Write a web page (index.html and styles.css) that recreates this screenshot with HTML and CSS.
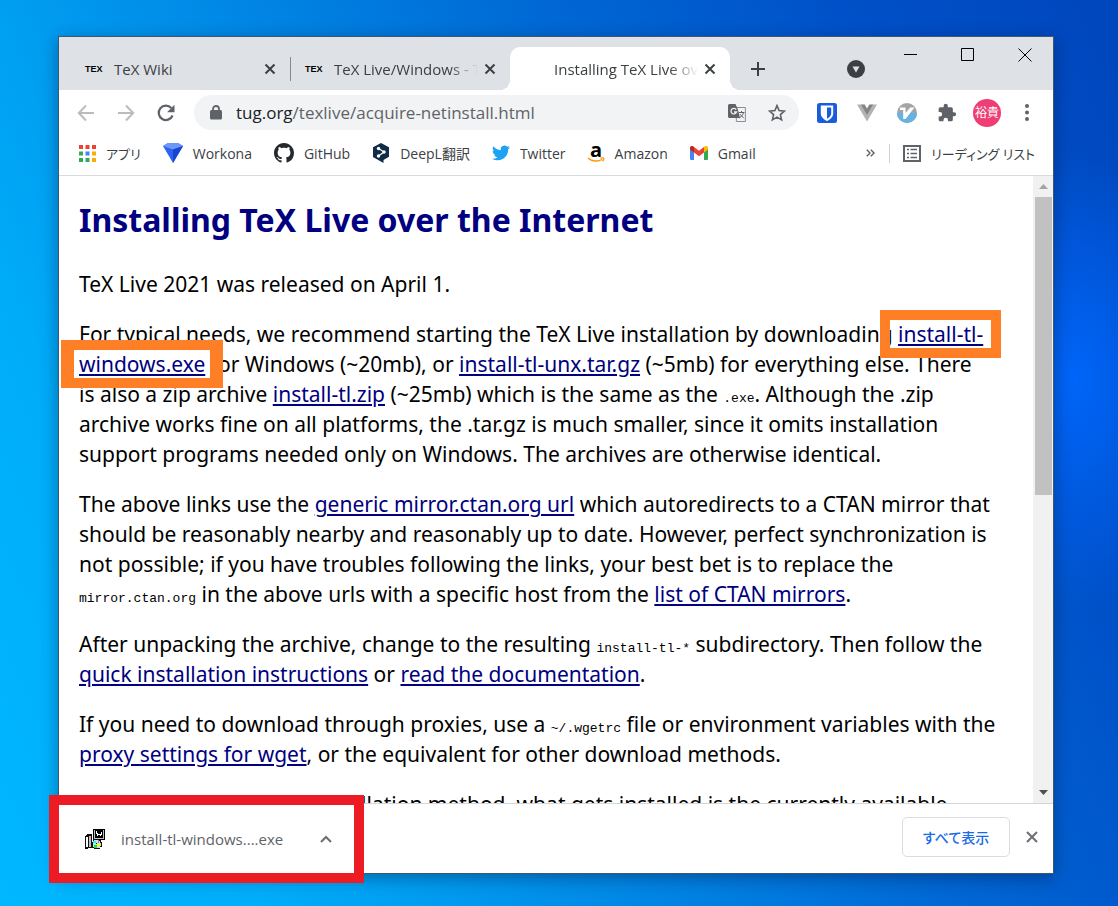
FILE: index.html
```html
<!DOCTYPE html>
<html lang="ja">
<head>
<meta charset="utf-8">
<title>Installing TeX Live over the Internet</title>
<link rel="stylesheet" href="styles.css">
</head>
<body>
<main class="window">
  <header class="tabstrip">
    <div class="tab">
      <span class="favicon">TEX</span><span class="tab-title">TeX Wiki</span>
      <button class="icon-btn" aria-label="Close tab"><svg width="12" height="12" viewBox="0 0 12 12"><path d="M1.500 1.500l9 9M10.500 1.500l-9 9" stroke="#3c4043" stroke-width="2"/></svg></button>
    </div>
    <div class="tab tab-second">
      <span class="favicon">TEX</span><span class="tab-title fade">TeX Live/Windows - T</span>
      <button class="icon-btn" aria-label="Close tab"><svg width="12" height="12" viewBox="0 0 12 12"><path d="M1.500 1.500l9 9M10.500 1.500l-9 9" stroke="#3c4043" stroke-width="2"/></svg></button>
    </div>
    <div class="tab tab-active">
      <span class="favicon"></span><span class="tab-title fade">Installing TeX Live ove</span>
      <button class="icon-btn" aria-label="Close tab"><svg width="12" height="12" viewBox="0 0 12 12"><path d="M1.500 1.500l9 9M10.500 1.500l-9 9" stroke="#3c4043" stroke-width="2"/></svg></button>
    </div>
    <button class="icon-btn new-tab" aria-label="New tab"><svg width="16" height="16" viewBox="0 0 16 16"><path d="M8 1v14M1 8h14" stroke="#3c4043" stroke-width="2"/></svg></button>
    <div class="strip-end">
      <button class="icon-btn tab-search" aria-label="Search tabs"><svg width="18" height="18" viewBox="0 0 18 18"><circle cx="9" cy="9" r="9" fill="#3c4043"/><path d="M5.500 6.500h7L9 12.500z" fill="#dee1e6"/></svg></button>
      <div class="win-controls">
        <button class="icon-btn" aria-label="Minimize"><svg width="14" height="14" viewBox="0 0 14 14"><path d="M0 6.500h13" stroke="#000"/></svg></button>
        <button class="icon-btn" aria-label="Maximize"><svg width="14" height="14" viewBox="0 0 14 14"><path d="M.5.5h12v12H.5z" fill="none" stroke="#000"/></svg></button>
        <button class="icon-btn" aria-label="Close"><svg width="14" height="14" viewBox="0 0 14 14"><path d="M.5.5l13 13M13.500.5l-13 13" stroke="#000"/></svg></button>
      </div>
    </div>
  </header>

  <nav class="toolbar">
    <button class="icon-btn nav-btn" aria-label="Back"><svg width="18" height="18" viewBox="0 0 18 18"><path d="M17 9H2M9 1.500L1.800 9l7.200 7.500" fill="none" stroke="#babcbe" stroke-width="2"/></svg></button>
    <button class="icon-btn nav-btn" aria-label="Forward"><svg width="18" height="18" viewBox="0 0 18 18"><path d="M1 9h15M9 1.500L16.200 9 9 16.500" fill="none" stroke="#babcbe" stroke-width="2"/></svg></button>
    <button class="icon-btn nav-btn" aria-label="Reload"><svg width="18" height="18" viewBox="0 0 18 18"><path d="M15.600 11.500A7.200 7.200 0 1 1 14.300 4" fill="none" stroke="#5f6368" stroke-width="2.200"/><path d="M17.500.8v7.400h-7.400z" fill="#5f6368"/></svg></button>
    <div class="omnibox">
      <svg class="lock" width="12" height="15" viewBox="0 0 12 15"><rect x="0" y="5" width="12" height="9.500" rx="1.500" fill="#5f6368"/><path d="M3 6V4a3 3 0 0 1 6 0v2" fill="none" stroke="#5f6368" stroke-width="1.800"/></svg>
      <span class="url"><b>tug.org</b>/texlive/acquire-netinstall.html</span>
      <button class="icon-btn" aria-label="Translate"><svg width="18" height="18" viewBox="0 0 18 18"><path d="M8 3.500h9.400v14h-9z" fill="#f1f3f4" stroke="#8a8d91"/><path d="M1.500 0h6l2.300 5.300L12 14H1.500A1.500 1.500 0 0 1 0 12.500v-11A1.500 1.500 0 0 1 1.500 0z" fill="#5f6368"/><path d="M8.200 5.600A2.800 2.800 0 1 0 8.500 8H6" fill="none" stroke="#f1f3f4" stroke-width="1.300"/><path d="M10.500 8.500h6M13.500 7v1.500M15.500 8.500c-.5 2.500-2 4-4 5.500M11.800 10l4 4.200" fill="none" stroke="#5f6368"/></svg></button>
      <button class="icon-btn" aria-label="Bookmark"><svg width="18" height="18" viewBox="0 0 18 18"><path d="M9 1.600l2.100 5 5.300.5-4 3.500 1.200 5.300L9 13.100l-4.600 2.800 1.200-5.300-4-3.500 5.300-.5z" fill="none" stroke="#5f6368" stroke-width="1.600"/></svg></button>
    </div>
    <div class="extensions">
      <button class="icon-btn" aria-label="Bitwarden"><svg width="20" height="20" viewBox="0 0 20 20"><rect width="20" height="20" rx="2.500" fill="#175ddc"/><path d="M3.800 2.500h12.400v7.700c0 4-3.200 6.400-6.200 7.800-3-1.400-6.200-3.800-6.200-7.800z" fill="#fff"/><path d="M10 4.500h4.200v5.700c0 2.600-1.900 4.200-4.200 5.500z" fill="#175ddc"/></svg></button>
      <button class="icon-btn" aria-label="Vue"><svg width="20" height="20" viewBox="0 0 20 20"><path d="M0 1.500h5.500L10 9.500l4.500-8H20L10 18.500z" fill="#b3b3b3"/><path d="M4 1.500h3.700L10 5.500l2.300-4H16L10 12z" fill="#858585"/></svg></button>
      <button class="icon-btn" aria-label="Vimium"><svg width="20" height="20" viewBox="0 0 20 20"><circle cx="10" cy="10" r="10" fill="#a5a5a5"/><path d="M0 10h20a10 10 0 0 1-20 0z" fill="#66b2e4"/><path d="M3 4.500h5.500v5.500l4.700-5.500h4.300L8.500 16H6.200V7H3z" fill="#fff"/></svg></button>
      <button class="icon-btn" aria-label="Extensions"><svg width="20" height="20" viewBox="0 0 24 24"><path d="M20.500 11H19V7a2 2 0 0 0-2-2h-4V3.500a2.500 2.500 0 0 0-5 0V5H4a2 2 0 0 0-2 2v3.800h1.500a2.700 2.700 0 0 1 0 5.400H2V20a2 2 0 0 0 2 2h3.800v-1.500a2.700 2.700 0 0 1 5.400 0V22H17a2 2 0 0 0 2-2v-4h1.500a2.500 2.500 0 0 0 0-5z" fill="#5f6368"/></svg></button>
      <button class="avatar">裕貴</button>
      <button class="icon-btn menu" aria-label="Menu"><svg width="4" height="17" viewBox="0 0 4 17" fill="#5f6368"><circle cx="2" cy="2" r="2"/><circle cx="2" cy="8.500" r="2"/><circle cx="2" cy="15" r="2"/></svg></button>
    </div>
  </nav>

  <nav class="bookmarks">
    <a class="bm kana" href="#"><svg width="17" height="17" viewBox="0 0 17 17"><path d="M0 0h4v4H0zM6.500 0h4v4h-4zM13 0h4v4h-4z" fill="#ea4335"/><path d="M0 6.500h4v4H0zM0 13h4v4H0zM6.500 13h4v4h-4z" fill="#34a853"/><path d="M6.500 6.500h4v4h-4z" fill="#4285f4"/><path d="M13 6.500h4v4h-4zM13 13h4v4h-4z" fill="#fbac05"/></svg>アプリ</a>
    <a class="bm" href="#"><svg width="20" height="20" viewBox="0 0 20 20"><path d="M0 3l5-3h10l5 3-10 17z" fill="#2d62f0"/><path d="M0 3l5-3h10l5 3-10 3.500z" fill="#6c97fc"/><path d="M10 6.500L20 3 10 20z" fill="#1745cf"/></svg>Workona</a>
    <a class="bm" href="#"><svg width="20" height="20" viewBox="0 0 16 16"><path fill="#24292e" d="M8 0C3.580 0 0 3.580 0 8c0 3.540 2.290 6.530 5.470 7.590.4.070.55-.17.55-.38 0-.19-.01-.82-.01-1.490-2.010.37-2.530-.49-2.690-.94-.09-.23-.48-.94-.82-1.130-.28-.15-.68-.52-.01-.53.63-.01 1.080.58 1.230.82.72 1.210 1.870.87 2.330.66.070-.52.28-.87.51-1.070-1.780-.2-3.640-.89-3.640-3.950 0-.87.31-1.590.82-2.150-.08-.2-.36-1.020.08-2.120 0 0 .67-.21 2.200.82.640-.18 1.320-.27 2-.27s1.360.09 2 .27c1.530-1.040 2.200-.82 2.200-.82.44 1.100.16 1.920.08 2.120.51.56.82 1.270.82 2.150 0 3.070-1.870 3.750-3.650 3.950.29.25.54.73.54 1.480 0 1.070-.01 1.930-.01 2.200 0 .21.15.46.55.38A8.010 8.010 0 0 0 16 8c0-4.420-3.580-8-8-8z"/></svg>GitHub</a>
    <a class="bm" href="#"><svg width="18" height="20" viewBox="0 0 18 20"><path d="M9 0l8 4.300v9.400L11.500 17v3L1 14V4.300z" fill="#0f2b46"/><path d="M6.500 5.500L12 9l-5.500 4" fill="none" stroke="#fff" stroke-width="1.200"/><g fill="#fff"><circle cx="6.500" cy="5.500" r="1.700"/><circle cx="12" cy="9" r="1.700"/><circle cx="6.500" cy="13" r="1.700"/></g></svg>DeepL翻訳</a>
    <a class="bm" href="#"><svg width="18" height="18" viewBox="0 0 24 24"><path fill="#1da1f2" d="M23.953 4.570a10 10 0 0 1-2.825.775 4.958 4.958 0 0 0 2.163-2.723c-.951.555-2.005.959-3.127 1.184a4.920 4.920 0 0 0-8.384 4.482C7.690 8.095 4.067 6.130 1.640 3.162a4.822 4.822 0 0 0-.666 2.475c0 1.710.87 3.213 2.188 4.096a4.904 4.904 0 0 1-2.228-.616v.06a4.923 4.923 0 0 0 3.946 4.827 4.996 4.996 0 0 1-2.212.085 4.936 4.936 0 0 0 4.604 3.417 9.867 9.867 0 0 1-6.102 2.105c-.39 0-.779-.023-1.170-.067a13.995 13.995 0 0 0 7.557 2.209c9.053 0 13.998-7.496 13.998-13.985 0-.21 0-.42-.015-.63A9.935 9.935 0 0 0 24 4.590z"/></svg>Twitter</a>
    <a class="bm" href="#"><span class="amazon">a<svg width="17" height="6" viewBox="0 0 17 6"><path d="M0 1c4 3.500 10 4 14 1.500M12.500 1.200c2-.5 3-.3 3.200 0 .3.600-.2 2-1.200 3" fill="none" stroke="#f90" stroke-width="1.400"/></svg></span>Amazon</a>
    <a class="bm" href="#"><svg width="18" height="14" viewBox="0 0 18 14"><path d="M0 2v10.700C0 13.400.6 14 1.300 14H4V5.500z" fill="#4285f4"/><path d="M18 2v10.700c0 .7-.6 1.300-1.300 1.300H14V5.500z" fill="#34a853"/><path d="M14 1v5.500l4-3V2c0-2-2-2.500-3-1.700z" fill="#fbbc04"/><path d="M4 1v5.500l-4-3V2C0 0 2-.5 3 .3z" fill="#c5221f"/><path d="M4 1l5 3.800L14 1v5.500l-5 3.800-5-3.800z" fill="#ea4335"/></svg>Gmail</a>
    <div class="bm-end">
      <button class="more" aria-label="More bookmarks"><svg width="9" height="8" viewBox="0 0 9 8"><path d="M.8.8L4 4 .8 7.200M4.800.8L8 4 4.800 7.200" fill="none" stroke="#5f6368" stroke-width="1.400"/></svg></button>
      <a class="bm kana reading" href="#"><svg width="18" height="17" viewBox="0 0 18 17"><path d="M1 1h16v15H1z" fill="none" stroke="#5f6368" stroke-width="2"/><path d="M4 4.500h2M7.500 4.500H14M4 8.500h2M7.500 8.500H14M4 12.500h2M7.500 12.500H14" stroke="#5f6368" stroke-width="1.600"/></svg>リーディング リスト</a>
    </div>
  </nav>

  <section class="viewport">
    <article class="page">
      <h1>Installing TeX Live over the Internet</h1>
      <p>TeX Live 2021 was released on April 1.</p>
      <p>For typical needs, we recommend starting the TeX Live installation by downloading <a href="#"><span class="mark">install-tl-</span><br><span class="mark mark-wide">windows.exe</span></a> for Windows (~20mb), or <a href="#">install-tl-unx.tar.gz</a> (~5mb) for everything else. There<br>is also a zip archive <a href="#">install-tl.zip</a> (~25mb) which is the same as the <code>.exe</code>. Although the .zip<br>archive works fine on all platforms, the .tar.gz is much smaller, since it omits installation<br>support programs needed only on Windows. The archives are otherwise identical.</p>
      <p>The above links use the <a href="#">generic mirror.ctan.org url</a> which autoredirects to a CTAN mirror that<br>should be reasonably nearby and reasonably up to date. However, perfect synchronization is<br>not possible; if you have troubles following the links, your best bet is to replace the<br><code>mirror.ctan.org</code> in the above urls with a specific host from the <a href="#">list of CTAN mirrors</a>.</p>
      <p>After unpacking the archive, change to the resulting <code>install-tl-*</code> subdirectory. Then follow the<br><a href="#">quick installation instructions</a> or <a href="#">read the documentation</a>.</p>
      <p>If you need to download through proxies, use a <code>~/.wgetrc</code> file or environment variables with the<br><a href="#">proxy settings for wget</a>, or the equivalent for other download methods.</p>
      <p>Regardless of the exact installation method, what gets installed is the currently available</p>
    </article>
    <div class="scrollbar">
      <svg width="9" height="5" viewBox="0 0 9 5"><path d="M0 5L4.500 0 9 5z" fill="#a3a3a3"/></svg>
      <div class="track"><div class="thumb"></div></div>
      <svg width="9" height="5" viewBox="0 0 9 5"><path d="M0 0h9L4.500 5z" fill="#505050"/></svg>
    </div>
  </section>

  <footer class="shelf">
    <div class="download">
      <svg width="20" height="20" viewBox="0 0 20 20" shape-rendering="crispEdges"><path d="M8 0h12v11H8z" fill="#000"/><path d="M18 1h1v9h-1zM9 9h10v1H9zM9 1h1v8H9z" fill="#c0c0c0"/><path d="M11 2h1v2h1v1h3V3h1v3h-1v1h-1V6h-2v1h-1z" fill="#fff"/><path d="M1 6h1V5h5v14H3v1H0V7h1z" fill="#111"/><path d="M1 8h2v10H1z" fill="#fff"/><path d="M4 7h2v11H4z" fill="#c0c0c0"/><path d="M8 10h6v1h2v2h1v5h-2v2H9v-1H7v-6h1z" fill="#111"/><path d="M9 11h5v1h1v2h1v3h-1v2H9v-1H8v-5h1z" fill="#dcdcdc"/><path d="M8 12h3v2H8z" fill="#0ff"/><path d="M12 15h3v2h-3z" fill="#ff0"/><path d="M9 16h3v3H9z" fill="#0e4"/><path d="M13 11h1v3h-1z" fill="#888"/><path d="M11 14h1v1h-1z" fill="#111"/></svg>
      <span class="file">install-tl-windows....exe</span>
      <button class="icon-btn" aria-label="Download options"><svg width="12" height="8" viewBox="0 0 12 8"><path d="M1 7l5-5 5 5" fill="none" stroke="#6b6e72" stroke-width="2"/></svg></button>
    </div>
    <div class="shelf-end">
      <button class="show-all">すべて表示</button>
      <button class="icon-btn" aria-label="Close downloads bar"><svg width="12" height="12" viewBox="0 0 12 12"><path d="M1 1l10 10M11 1L1 11" stroke="#6b6e72" stroke-width="2"/></svg></button>
    </div>
  </footer>
</main>
</body>
</html>
```

FILE: styles.css
```css
* { box-sizing: border-box; }

body {
  margin: 0;
  height: 100vh;
  padding: 36px 64px 32px 58px;
  background:
    radial-gradient(ellipse 130px 230px at 96% 42%, rgba(0, 104, 255, .9), rgba(0, 96, 255, 0)),
    linear-gradient(66deg, #00b8ff 0%, #00acf8 18%, #0090ea 36%, #0068d4 62%, #0050c8 82%, #0046bc 100%);
  font-family: "Open Sans", "Noto Sans CJK JP", sans-serif;
  font-size: 15px;
  color: #3c4043;
  overflow: hidden;
}

.window {
  display: flex;
  flex-direction: column;
  height: 100%;
  border: 1px solid #3d5870;
  background: #fff;
  box-shadow: 0 4px 16px rgba(0, 20, 60, .4);
}

button { border: 0; background: none; padding: 0; font: inherit; }
.icon-btn { display: inline-flex; align-items: center; justify-content: center; flex: none; }
svg { display: block; flex: none; }

.tabstrip { display: flex; height: 53px; padding-top: 10px; background: #dee1e6; }
.tab {
  display: flex;
  align-items: center;
  flex: 0 1 220px;
  min-width: 0;
  padding: 0 14px 0 15px;
}
.tab:first-child { flex-basis: 231px; padding-left: 26px; }
.tab-second { position: relative; }
.tab-second::before {
  content: "";
  position: absolute;
  left: 0;
  top: 10px;
  width: 1px;
  height: 24px;
  background: #85888d;
}
.tab-active { position: relative; background: #fff; border-radius: 10px 10px 0 0; }
.tab-active::before,
.tab-active::after {
  content: "";
  position: absolute;
  bottom: 0;
  width: 10px;
  height: 10px;
}
.tab-active::before { right: 100%; background: radial-gradient(circle at 0 0, #dee1e6 10px, #fff 10px); }
.tab-active::after { left: 100%; background: radial-gradient(circle at 100% 0, #dee1e6 10px, #fff 10px); }
.favicon {
  flex: none;
  width: 29px;
  font: bold 9px "Liberation Sans", sans-serif;
  color: #000;
}
.tab-title { flex: 1; min-width: 0; margin-right: 6px; white-space: nowrap; }
.fade { mask-image: linear-gradient(to right, #000 80%, transparent); }
.new-tab { width: 55px; }
.strip-end { display: flex; margin-left: auto; }
.tab-search { width: 36px; margin-right: 8px; }
.win-controls { display: flex; align-items: flex-start; }
.win-controls .icon-btn { width: 57px; height: 16px; }

.toolbar { display: flex; align-items: center; height: 45px; padding: 0 16px 0 18px; }
.nav-btn { width: 18px; margin-right: 22px; }
.omnibox {
  display: flex;
  align-items: center;
  flex: 1;
  gap: 22px;
  height: 35px;
  margin-left: -3px;
  padding: 0 13px 0 16px;
  border-radius: 18px;
  background: #f1f3f4;
}
.lock { margin-right: -8px; }
.url { flex: 1; font-size: 17px; color: #5f6368; white-space: nowrap; }
.url b { font-weight: 400; color: #202124; }
.extensions { display: flex; align-items: center; gap: 20px; padding-left: 18px; }
.avatar {
  width: 28px;
  height: 28px;
  margin: 0 -4px;
  border-radius: 50%;
  background: #ef3d75;
  color: #fff;
  font-size: 12px;
  line-height: 28px;
}
.menu { width: 20px; }

.bookmarks {
  display: flex;
  align-items: center;
  height: 41px;
  padding: 0 18px 4px 20px;
  border-bottom: 1px solid #d9dbde;
  gap: 22px;
  font-size: 14px;
}
.bm { display: flex; align-items: center; gap: 10px; color: #3c4043; text-decoration: none; white-space: nowrap; }
.kana { font-size: 13px; font-feature-settings: "palt"; }
.amazon { display: grid; font: bold 20px/14px "Open Sans", sans-serif; color: #000; justify-items: center; }
.bm-end { display: flex; align-items: center; gap: 14px; margin-left: auto; }
.reading { border-left: 1px solid #cfd1d4; padding-left: 13px; }

.viewport { display: flex; flex: 1; min-height: 0; overflow: hidden; }
.page {
  flex: 1;
  min-width: 0;
  padding: 19px 24px 0 20px;
  font: 21px/30px "Noto Sans", "Noto Sans CJK JP", sans-serif;
  color: #000;
  white-space: nowrap;
}
.page h1 { margin: 0 0 24px; font-size: 32px; line-height: 50px; color: #000080; }
.page p { margin: 0 0 20px; }
.page a { color: #000080; text-decoration-thickness: 2px; text-underline-offset: 2px; }
.page code { font: 13px/16px "Liberation Mono", monospace; }
.mark { position: relative; }
.mark::after {
  content: "";
  position: absolute;
  inset: -10px -18px;
  border: 10px solid #ff7f27;
}
.mark-wide::after { border-width: 10px 13px; }

.scrollbar {
  display: flex;
  flex-direction: column;
  align-items: center;
  flex: none;
  width: 20px;
  padding: 8px 0;
  background: #f1f1f1;
}
.track { flex: 1; width: 17px; padding: 8px 0; }
.thumb { height: 51%; background: #c1c1c1; }

.shelf {
  display: flex;
  align-items: center;
  height: 70px;
  border-top: 1px solid #d3d5d8;
}
.download {
  position: relative;
  display: flex;
  align-items: center;
  gap: 16px;
  width: 295px;
  height: 100%;
  padding: 0 22px 0 26px;
  background: #fff;
  color: #5f6368;
}
.download::after { content: ""; position: absolute; inset: -9px -10px -10px; border: 10px solid #ed1c24; }
.file { flex: 1; white-space: nowrap; }
.shelf-end { display: flex; align-items: center; gap: 16px; margin-left: auto; padding: 0 15px 3px 0; }
.show-all {
  width: 108px;
  height: 40px;
  border: 1px solid #dadce0;
  border-radius: 5px;
  color: #1a6be8;
  font-size: 14px;
  font-weight: 500;
  font-feature-settings: "palt";
}
```
